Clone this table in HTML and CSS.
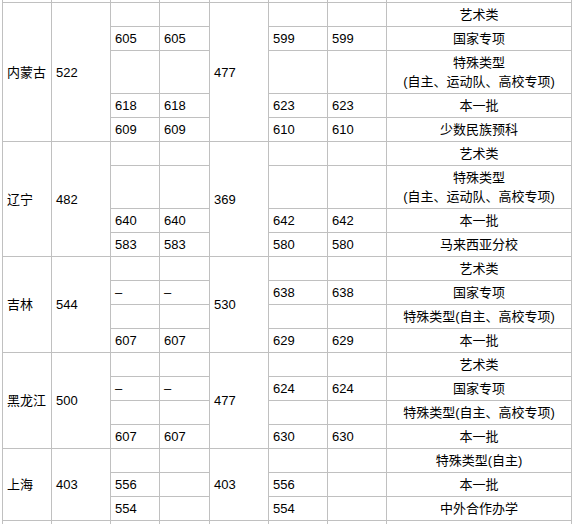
FILE: index.html
```html
<!DOCTYPE html>
<html lang="zh-CN">
<head>
<meta charset="utf-8">
<title>分数线</title>
<link rel="stylesheet" href="styles.css">
</head>
<body>
<div class="viewport">
<table class="scores">
<colgroup>
<col class="c-prov"><col class="c-ctrl"><col class="c-num"><col class="c-num2"><col class="c-ctrl"><col class="c-ctrl"><col class="c-ctrl"><col class="c-type">
</colgroup>
<tbody>
<tr class="stub"><td></td><td></td><td></td><td></td><td></td><td></td><td></td><td class="type"></td></tr>

<tr><td rowspan="5">内蒙古</td><td rowspan="5">522</td><td></td><td></td><td rowspan="5">477</td><td></td><td></td><td class="type">艺术类</td></tr>
<tr><td>605</td><td>605</td><td>599</td><td>599</td><td class="type">国家专项</td></tr>
<tr><td></td><td></td><td></td><td></td><td class="type">特殊类型<br>(自主、运动队、高校专项)</td></tr>
<tr><td>618</td><td>618</td><td>623</td><td>623</td><td class="type">本一批</td></tr>
<tr><td>609</td><td>609</td><td>610</td><td>610</td><td class="type">少数民族预科</td></tr>

<tr><td rowspan="4">辽宁</td><td rowspan="4">482</td><td></td><td></td><td rowspan="4">369</td><td></td><td></td><td class="type">艺术类</td></tr>
<tr><td></td><td></td><td></td><td></td><td class="type">特殊类型<br>(自主、运动队、高校专项)</td></tr>
<tr><td>640</td><td>640</td><td>642</td><td>642</td><td class="type">本一批</td></tr>
<tr><td>583</td><td>583</td><td>580</td><td>580</td><td class="type">马来西亚分校</td></tr>

<tr><td rowspan="4">吉林</td><td rowspan="4">544</td><td></td><td></td><td rowspan="4">530</td><td></td><td></td><td class="type">艺术类</td></tr>
<tr><td>–</td><td>–</td><td>638</td><td>638</td><td class="type">国家专项</td></tr>
<tr><td></td><td></td><td></td><td></td><td class="type">特殊类型(自主、高校专项)</td></tr>
<tr><td>607</td><td>607</td><td>629</td><td>629</td><td class="type">本一批</td></tr>

<tr><td rowspan="4">黑龙江</td><td rowspan="4">500</td><td></td><td></td><td rowspan="4">477</td><td></td><td></td><td class="type">艺术类</td></tr>
<tr><td>–</td><td>–</td><td>624</td><td>624</td><td class="type">国家专项</td></tr>
<tr><td></td><td></td><td></td><td></td><td class="type">特殊类型(自主、高校专项)</td></tr>
<tr><td>607</td><td>607</td><td>630</td><td>630</td><td class="type">本一批</td></tr>

<tr><td rowspan="3">上海</td><td rowspan="3">403</td><td></td><td></td><td rowspan="3">403</td><td></td><td></td><td class="type">特殊类型(自主)</td></tr>
<tr><td>556</td><td></td><td>556</td><td></td><td class="type">本一批</td></tr>
<tr><td>554</td><td></td><td>554</td><td></td><td class="type">中外合作办学</td></tr>

<tr class="stub"><td></td><td></td><td></td><td></td><td></td><td></td><td></td><td class="type"></td></tr>
</tbody>
</table>
</div>
</body>
</html>
```
FILE: styles.css
```css
html, body {
  margin: 0;
  padding: 0;
  background: #ffffff;
}

.viewport {
  height: 524px;
  overflow: hidden;
  padding-left: 2px;
}

.scores {
  border-collapse: separate;
  border-spacing: 0;
  table-layout: fixed;
  width: 570px;
  margin-top: -22px;
  border-left: 1px solid #c0c0c0;
  border-top: 1px solid #c0c0c0;
  font-family: "Liberation Sans", "Noto Sans CJK SC", sans-serif;
  font-size: 13px;
  line-height: 19px;
  color: #000000;
}

.c-prov { width: 49px; }
.c-ctrl { width: 59px; }
.c-num { width: 49px; }
.c-num2 { width: 50px; }
.c-type { width: 185px; }

.scores tr {
  height: 24px;
}

.scores td {
  border-right: 1px solid #c0c0c0;
  border-bottom: 1px solid #c0c0c0;
  padding: 2px 4px;
  vertical-align: middle;
  text-align: left;
  white-space: nowrap;
  overflow: hidden;
}

.scores td.type {
  text-align: center;
}
```
